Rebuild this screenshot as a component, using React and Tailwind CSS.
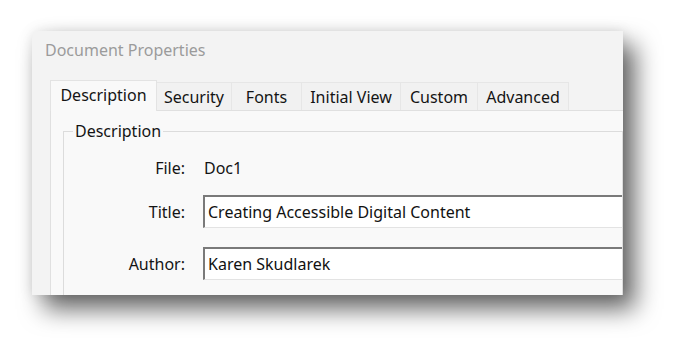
import React from "react";

const tabs = [
  { label: "Description", w: "w-[107px]", active: true },
  { label: "Security", w: "w-[75px]" },
  { label: "Fonts", w: "w-[70px]" },
  { label: "Initial View", w: "w-[99px]" },
  { label: "Custom", w: "w-[77px]" },
  { label: "Advanced", w: "w-[91px]" },
];

function Field({ value }) {
  return (
    <div className="h-[33px] bg-white border-t-2 border-l-2 border-t-[#7a7a7a] border-l-[#7a7a7a] border-b border-b-[#e3e3e3] flex items-center pl-[3px] text-[#111] whitespace-nowrap">
      {value}
    </div>
  );
}

export default function App() {
  return (
    <div
      className="w-[686px] h-[358px] bg-white overflow-hidden pt-[31px] pl-[32px]"
      style={{ fontFamily: '"Noto Sans", "Open Sans", sans-serif' }}
    >
      <div className="w-[591px] h-[264px] bg-[#f3f3f3] rounded-tl-[7px] overflow-hidden flex flex-col shadow-[12px_14px_24px_rgba(0,0,0,0.6),0_0_14px_rgba(0,0,0,0.10)]">
        <div className="shrink-0 h-[49px] pl-[13px] pt-[8px] text-[16px] leading-[22px] text-[#9b9b9b]">
          Document Properties
        </div>
        <div className="shrink-0 flex items-end ml-[18px] h-[30px] text-[16px] text-[#141414]">
          {tabs.map((t) =>
            t.active ? (
              <div
                key={t.label}
                className={`${t.w} shrink-0 h-[31px] -mb-[1px] relative z-10 bg-[#f9f9f9] border border-b-0 border-[#e3e3e3] flex items-center justify-center pb-[3px]`}
              >
                {t.label}
              </div>
            ) : (
              <div
                key={t.label}
                className={`${t.w} shrink-0 h-[28px] bg-[#f1f1f1] border border-b-0 border-l-0 border-[#e6e6e6] flex items-center justify-center`}
              >
                {t.label}
              </div>
            )
          )}
        </div>
        <div className="flex-1 ml-[18px] bg-[#f9f9f9] border-l border-t border-[#e0e0e0] text-[16px] text-[#141414]">
          <fieldset className="mt-[10px] ml-[12px] border border-[#dcdcdc] pb-[20px]">
            <legend className="ml-[9px] px-[2px] leading-[20px]">Description</legend>
            <div className="grid grid-cols-[121px_1fr] gap-x-[18px] items-center mt-[17px]">
              <div className="text-right leading-[20px]">File:</div>
              <div className="leading-[20px] pl-[1px]">Doc1</div>
              <div className="text-right mt-[17px]">Title:</div>
              <div className="mt-[17px]">
                <Field value="Creating Accessible Digital Content" />
              </div>
              <div className="text-right mt-[19px]">Author:</div>
              <div className="mt-[19px]">
                <Field value="Karen Skudlarek" />
              </div>
            </div>
          </fieldset>
        </div>
      </div>
    </div>
  );
}
